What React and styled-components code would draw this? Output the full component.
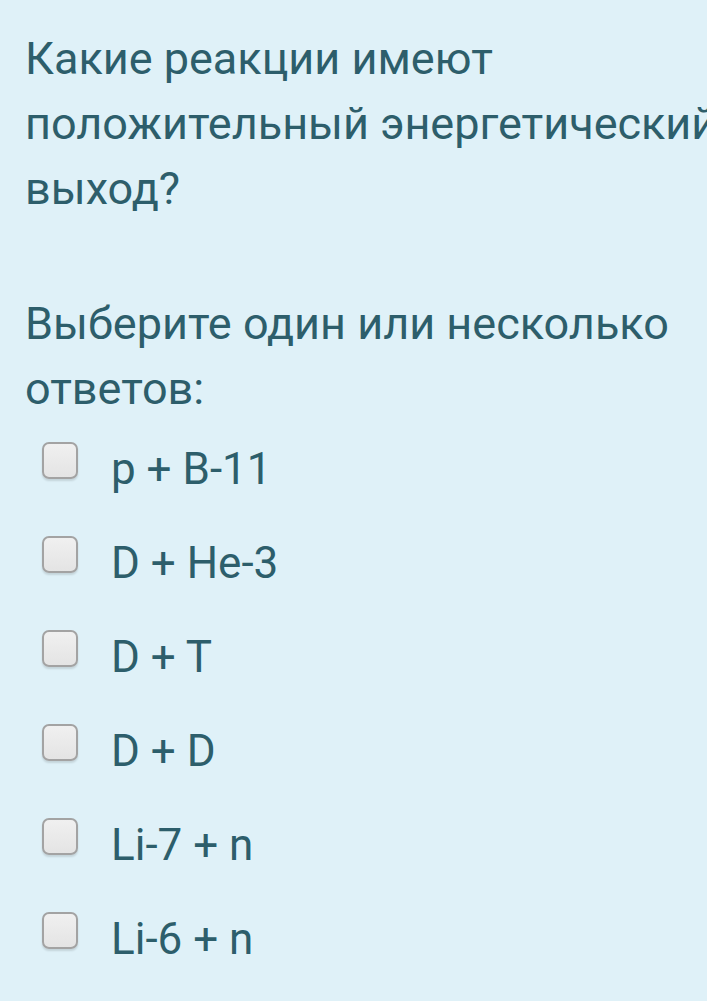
import React, { useState } from "react";
import styled, { createGlobalStyle } from "styled-components";

const answers = ["p + B-11", "D + He-3", "D + T", "D + D", "Li-7 + n", "Li-6 + n"];

const GlobalStyle = createGlobalStyle`
  html, body {
    margin: 0;
    padding: 0;
    background: #dff1f8;
    overflow: hidden;
  }
  body {
    font-family: Roboto, "Noto Sans", sans-serif;
  }
`;

const Page = styled.div`
  width: 780px;
  min-height: 1001px;
  padding: 26px 0 0 25px;
  box-sizing: border-box;
  color: #2d5e6b;
`;

const Question = styled.p`
  margin: 0;
  font-size: 45px;
  line-height: 65px;
`;

const Prompt = styled.p`
  margin: 70px 0 0;
  font-size: 45px;
  line-height: 65px;
`;

const List = styled.div`
  display: flex;
  flex-direction: column;
  margin-top: 1px;
`;

const Option = styled.label`
  display: flex;
  align-items: center;
  height: 94px;
  cursor: pointer;
`;

const Box = styled.span`
  width: 32px;
  height: 33px;
  margin: 0 0 18px 17px;
  border: 2px solid ${(p) => (p.checked ? "#2d5e6b" : "#a3a3a3")};
  border-radius: 7px;
  background: linear-gradient(#f0f0f0, #e4e4e4);
  box-shadow: 0 2px 2px rgba(0, 0, 0, 0.12);
  display: flex;
  align-items: center;
  justify-content: center;
  color: #2d5e6b;
  font-size: 24px;
`;

const Label = styled.span`
  margin-left: 33px;
  font-size: 44px;
  line-height: 50px;
`;

const App = () => {
  const [checked, setChecked] = useState({});

  return (
    <Page>
      <GlobalStyle />
      <Question>Какие реакции имеют положительный энергетический выход?</Question>
      <Prompt>Выберите один или несколько ответов:</Prompt>
      <List>
        {answers.map((a) => (
          <Option key={a} onClick={() => setChecked({ ...checked, [a]: !checked[a] })}>
            <Box checked={checked[a]}>{checked[a] ? "✓" : ""}</Box>
            <Label>{a}</Label>
          </Option>
        ))}
      </List>
    </Page>
  );
};

export default App;
